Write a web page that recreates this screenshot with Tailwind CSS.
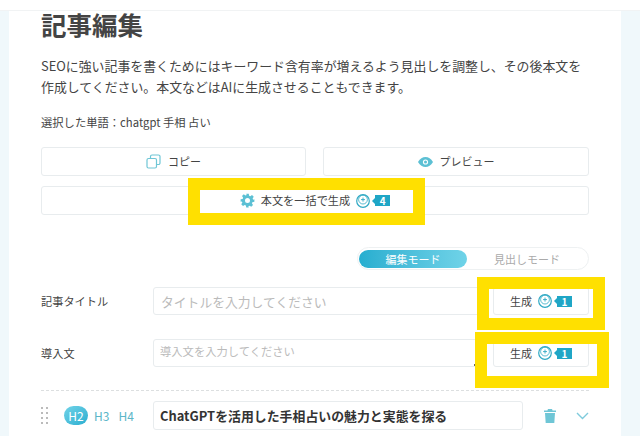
<!DOCTYPE html>
<html lang="ja">
  <head>
    <meta charset="UTF-8" />
    <title>記事編集</title>
    <script src="https://cdn.jsdelivr.net/npm/@tailwindcss/browser@4"></script>
  </head>
  <body class="bg-[#f0f8fb] font-['Noto_Sans_CJK_JP','Noto_Sans',sans-serif] text-[#444]">
    <div class="relative w-[640px] h-[436px] overflow-hidden">
      <div class="h-[11px] bg-white border-b border-[#f1f3f4]"></div>

      <main class="ml-[9px] w-[612px] h-[425px] bg-white px-[32px]">
        <h1 class="text-[25.5px] leading-[26px] font-bold text-[#444]">記事編集</h1>
        <p class="mt-[18px] text-[12.9px] leading-[21px]">
          SEOに強い記事を書くためにはキーワード含有率が増えるよう見出しを調整し、その後本文を<br />作成してください。本文などはAIに生成させることもできます。
        </p>
        <p class="mt-[16px] text-[11.3px] leading-[18px]">選択した単語：chatgpt 手相 占い</p>

        <div class="mt-[16px] grid grid-cols-[265px_266px] gap-x-[17px] gap-y-[10px]">
          <button class="h-[29px] border border-[#e8ecee] rounded-[3px] flex items-center justify-center gap-[7px] text-[11px]">
            <svg width="15" height="15" viewBox="0 0 15 15" fill="none" stroke="#6fc6d6" stroke-width="1.2">
              <rect x="1" y="4.5" width="9.5" height="9.5" rx="1.5" />
              <path d="M4.5 4.5V2.5A1.5 1.5 0 0 1 6 1h6.500A1.500 1.500 0 0 1 14 2.500V9a1.500 1.500 0 0 1-1.500 1.500h-2" />
            </svg>
            コピー
          </button>
          <button class="h-[29px] border border-[#e8ecee] rounded-[3px] flex items-center justify-center gap-[7px] text-[11px]">
            <svg width="15" height="10" viewBox="0 0 15 10">
              <path d="M0 5C2 1.600 4.600 0 7.500 0S13 1.600 15 5c-2 3.400-4.600 5-7.500 5S2 8.400 0 5Z" fill="#5cc0d4" />
              <circle cx="7.5" cy="5" r="2.6" fill="#fff" />
              <circle cx="7.5" cy="5" r="1.5" fill="#5cc0d4" />
            </svg>
            プレビュー
          </button>
          <button class="col-span-2 h-[29px] border border-[#e8ecee] rounded-[3px] flex items-center justify-center text-[11.2px]">
            <svg class="mr-[6px] shrink-0" width="15" height="15" viewBox="0 0 24 24" fill="#5cc0d4">
              <path fill-rule="evenodd" d="M10 1h4l.6 3.200 1.900.8 2.700-1.800 2.800 2.800-1.800 2.700.8 1.900L23 10v4l-3.200.6-.8 1.900 1.800 2.700-2.800 2.800-2.700-1.800-1.900.8L14 23h-4l-.6-3.200-1.900-.8-2.700 1.800-2.800-2.800 1.800-2.700-.8-1.900L1 14v-4l3.200-.6.8-1.900-1.800-2.700 2.800-2.800 2.700 1.800 1.900-.8L10 1Zm2 7a4 4 0 1 0 0 8 4 4 0 0 0 0-8Z" />
            </svg>
            本文を一括で生成
            <svg class="ml-[6px] shrink-0" width="14" height="14" viewBox="0 0 14 14" fill="none" stroke="#2fa9c4">
              <circle cx="7" cy="7" r="6.300" stroke-width="1.200" />
              <circle cx="7" cy="5.600" r="4.400" stroke-width="0.800" />
              <path d="M5 5.600h4M7 3.600v4" stroke-width="0.900" />
            </svg>
            <span class="ml-[2px] w-0 h-0 border-y-[3px] border-y-transparent border-r-[3px] border-r-[#1fa6c6]"></span>
            <span class="w-[15px] h-[11px] bg-[#1fa6c6] text-white text-[10px] leading-[11px] font-bold text-center">4</span>
          </button>
        </div>

        <div class="mt-[32px] ml-auto w-[232px] h-[23px] border border-[#eef1f2] rounded-full px-[1px] flex items-center text-[11px]">
          <span class="w-[108px] h-[18px] rounded-full bg-linear-to-r from-[#25aed0] to-[#6fd3e8] text-white text-center leading-[18px]">編集モード</span>
          <span class="flex-1 text-center text-[#aaa] leading-[18px]">見出しモード</span>
        </div>

        <div class="mt-[17px] flex items-center">
          <label class="w-[112px] text-[11.2px]">記事タイトル</label>
          <input class="flex-1 min-w-0 h-[28px] border border-[#e8ecee] rounded-[3px] px-[7px] text-[12.8px] placeholder:text-[#bbb]" placeholder="タイトルを入力してください" />
          <button class="ml-[12px] w-[96px] h-[28px] border border-[#e8ecee] rounded-[3px] flex items-center justify-center text-[11px]">
            生成
            <svg class="ml-[6px] shrink-0" width="14" height="14" viewBox="0 0 14 14" fill="none" stroke="#2fa9c4">
              <circle cx="7" cy="7" r="6.300" stroke-width="1.200" />
              <circle cx="7" cy="5.600" r="4.400" stroke-width="0.800" />
              <path d="M5 5.600h4M7 3.600v4" stroke-width="0.900" />
            </svg>
            <span class="ml-[2px] w-0 h-0 border-y-[3px] border-y-transparent border-r-[3px] border-r-[#1fa6c6]"></span>
            <span class="w-[15px] h-[11px] bg-[#1fa6c6] text-white text-[10px] leading-[11px] font-bold text-center">1</span>
          </button>
        </div>

        <div class="mt-[24px] flex items-center">
          <label class="w-[112px] text-[11.2px]">導入文</label>
          <textarea class="flex-1 min-w-0 h-[28px] border border-[#e8ecee] rounded-[3px] px-[6px] py-[3px] text-[11.3px] leading-[16px] resize-none placeholder:text-[#bbb]" placeholder="導入文を入力してください"></textarea>
          <button class="ml-[12px] w-[96px] h-[28px] border border-[#e8ecee] rounded-[3px] flex items-center justify-center text-[11px]">
            生成
            <svg class="ml-[6px] shrink-0" width="14" height="14" viewBox="0 0 14 14" fill="none" stroke="#2fa9c4">
              <circle cx="7" cy="7" r="6.300" stroke-width="1.200" />
              <circle cx="7" cy="5.600" r="4.400" stroke-width="0.800" />
              <path d="M5 5.600h4M7 3.600v4" stroke-width="0.900" />
            </svg>
            <span class="ml-[2px] w-0 h-0 border-y-[3px] border-y-transparent border-r-[3px] border-r-[#1fa6c6]"></span>
            <span class="w-[15px] h-[11px] bg-[#1fa6c6] text-white text-[10px] leading-[11px] font-bold text-center">1</span>
          </button>
        </div>

        <div class="mt-[23px] border-t border-dashed border-[#dcdfe0]"></div>

        <div class="mt-[10px] flex items-center">
          <div class="w-[23px]">
            <div class="grid grid-cols-[2px_2px] gap-x-[3px] gap-y-[3px]">
              <i class="w-[2px] h-[2px] bg-[#bbb]"></i><i class="w-[2px] h-[2px] bg-[#bbb]"></i>
              <i class="w-[2px] h-[2px] bg-[#bbb]"></i><i class="w-[2px] h-[2px] bg-[#bbb]"></i>
              <i class="w-[2px] h-[2px] bg-[#bbb]"></i><i class="w-[2px] h-[2px] bg-[#bbb]"></i>
              <i class="w-[2px] h-[2px] bg-[#bbb]"></i><i class="w-[2px] h-[2px] bg-[#bbb]"></i>
            </div>
          </div>
          <div class="w-[89px] flex items-center text-[12px] text-[#5cb6c8]">
            <span class="w-[24px] h-[19px] rounded-full bg-linear-to-br from-[#6fd3e8] to-[#25aed0] text-white text-center leading-[19px]">H2</span>
            <span class="ml-[6px]">H3</span>
            <span class="ml-[9px]">H4</span>
          </div>
          <div class="w-[370px] h-[29px] border border-[#e8ecee] rounded-[3px] px-[6px] text-[12.9px] leading-[27px] font-bold text-[#333] whitespace-nowrap">ChatGPTを活用した手相占いの魅力と実態を探る</div>
          <svg class="ml-[21px]" width="12" height="14" viewBox="0 0 12 14" fill="#6fc6d6">
            <path d="M4 0h4l.6 1.500H12V3H0V1.500h3.400L4 0ZM1 4h10l-.7 10H1.700L1 4Z" />
          </svg>
          <svg class="ml-[20px]" width="13" height="8" viewBox="0 0 13 8" fill="none" stroke="#7fcbdc" stroke-width="1.4">
            <path d="M1 1l5.500 5.500L12 1" />
          </svg>
        </div>
      </main>

      <!-- yellow marks over the screenshot -->
      <div class="absolute left-[188px] top-[178px] w-[237px] h-[47px] border-[12px] border-[#ffe000]"></div>
      <div class="absolute left-[477px] top-[277px] w-[128px] h-[53px] border-[12px] border-[#ffe000]"></div>
      <div class="absolute left-[475px] top-[332px] w-[134px] h-[56px] border-[12px] border-[#ffe000]"></div>
      <div class="absolute left-[474px] top-[364px] w-px h-[2px] bg-[#666]"></div>
    </div>
  </body>
</html>
